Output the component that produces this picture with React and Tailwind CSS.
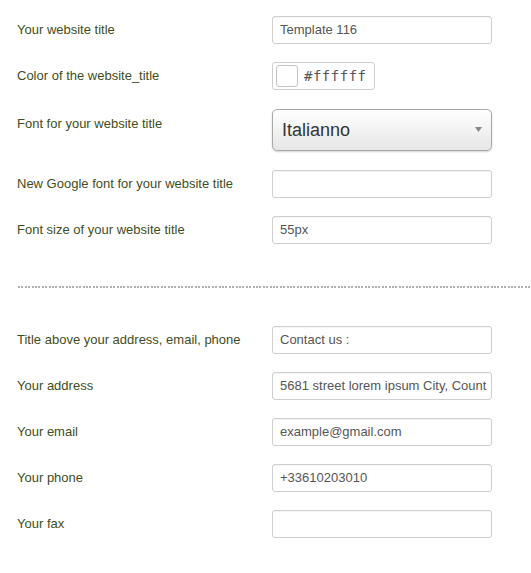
import React from "react";

const font = { fontFamily: '"Liberation Sans", Arial, sans-serif' };

function Label({ children, top }) {
  return (
    <div
      className={`w-[272px] shrink-0 pl-[17px] text-[13px] leading-[18px] text-[#3f4d1c] ${top ? "self-start pt-[6px]" : ""}`}
    >
      {children}
    </div>
  );
}

function TextBox({ value }) {
  return (
    <div className="w-[220px] h-[28px] border border-[#cfcfcf] rounded-[3px] bg-white pl-[7px] pr-[5px] flex items-center overflow-hidden whitespace-nowrap text-[13px] text-[#555] shadow-[inset_0_1px_1px_rgba(0,0,0,0.04)]">
      {value}
    </div>
  );
}

function Row({ label, children, className = "", top }) {
  return (
    <div className={`flex items-center ${className}`}>
      <Label top={top}>{label}</Label>
      {children}
    </div>
  );
}

export default function App() {
  return (
    <div className="w-[531px] h-[573px] bg-white overflow-hidden" style={font}>
      <div className="pt-[16px]">
        <Row label="Your website title">
          <TextBox value="Template 116" />
        </Row>
        <Row label="Color of the website_title" className="mt-[18px]">
          <div className="w-[103px] h-[28px] border border-[#cfcfcf] rounded-[3px] bg-white flex items-center pl-[3px]">
            <div className="w-[22px] h-[22px] border border-[#c4c4c4] rounded-[3px] bg-white" />
            <span
              className="ml-[6px] text-[14px] text-[#555] tracking-[0.5px]"
              style={{ fontFamily: '"DejaVu Sans Mono", monospace' }}
            >
              #ffffff
            </span>
          </div>
        </Row>
        <Row label="Font for your website title" className="mt-[19px]" top>
          <div className="relative w-[220px] h-[42px] border border-[#a8a8a8] rounded-[5px] bg-[linear-gradient(to_bottom,#ffffff_0%,#f4f4f4_45%,#e6e6e6_100%)] shadow-[0_1px_2px_rgba(0,0,0,0.18)] flex items-center pl-[9px]">
            <span className="text-[18px] text-[#333]">Italianno</span>
            <svg
              className="absolute right-[9px] top-[17px]"
              width="7"
              height="5"
              viewBox="0 0 7 5"
            >
              <polygon points="0,0 7,0 3.5,5" fill="#888" />
            </svg>
          </div>
        </Row>
        <Row label="New Google font for your website title" className="mt-[19px]">
          <TextBox value="" />
        </Row>
        <Row label="Font size of your website title" className="mt-[18px]">
          <TextBox value="55px" />
        </Row>

        <div className="ml-[18px] mt-[42px] h-[2px] bg-[repeating-linear-gradient(to_right,#b0b0b0_0px,#b0b0b0_2px,transparent_2px,transparent_3.4px)]" />

        <div className="mt-[38px]">
          <Row label="Title above your address, email, phone">
            <TextBox value="Contact us :" />
          </Row>
          <Row label="Your address" className="mt-[18px]">
            <TextBox value="5681 street lorem ipsum City, Count" />
          </Row>
          <Row label="Your email" className="mt-[18px]">
            <TextBox value="example@gmail.com" />
          </Row>
          <Row label="Your phone" className="mt-[18px]">
            <TextBox value="+33610203010" />
          </Row>
          <Row label="Your fax" className="mt-[18px]">
            <TextBox value="" />
          </Row>
        </div>
      </div>
    </div>
  );
}
